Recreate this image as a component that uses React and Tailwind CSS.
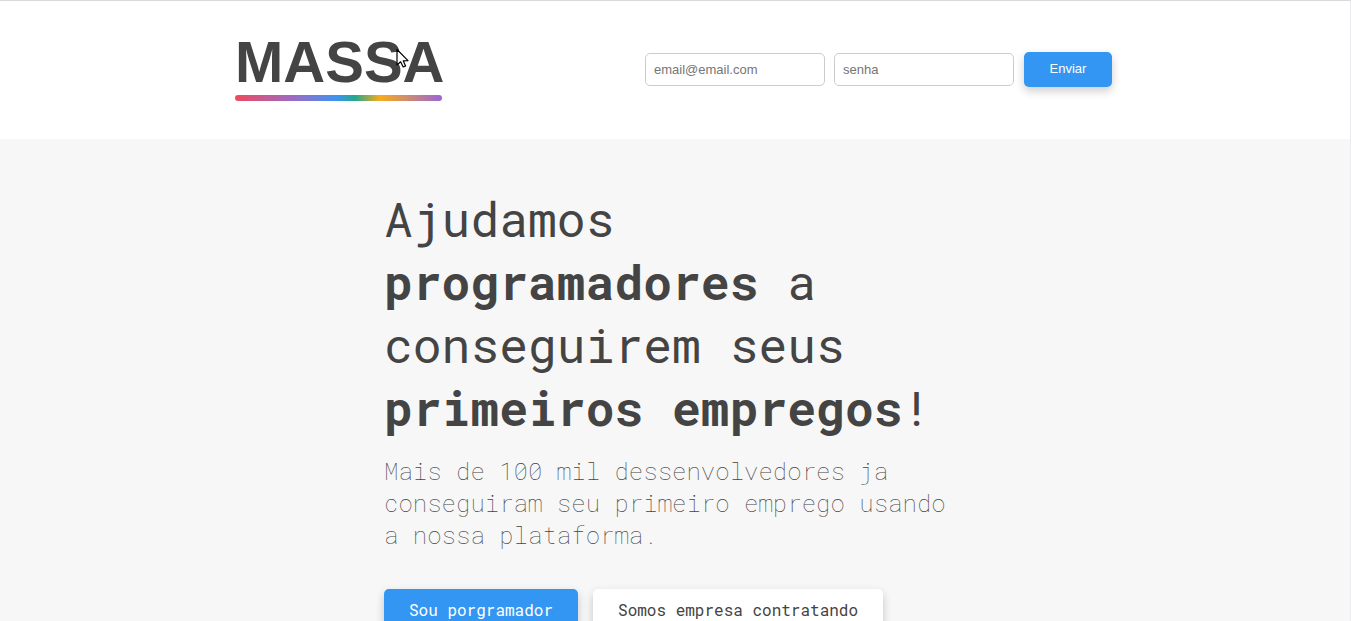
function Logo() {
  return (
    <a href="/" aria-label="Massa" className="flex flex-col gap-0.5 pb-2">
      <span className="text-[58px] leading-[62px] font-bold">MASSA</span>
      <span className="h-1.5 w-[207px] rounded-full bg-[linear-gradient(to_right,#ef4a60_0%,#9c6bc4_28%,#3f93f3_49%,#22a98c_58%,#f9ab1c_70%,#9b64d8_100%)]" />
    </a>
  );
}

function Cursor() {
  return (
    <svg
      aria-hidden="true"
      viewBox="0 0 13 20"
      className="pointer-events-none absolute top-[47px] left-[396px] h-5 w-[13px]"
    >
      <path
        d="M1 1.5 L1 17 L4.6 13.8 L7.2 19 L9.6 17.9 L7.3 12.9 L12 12.6 Z"
        fill="#fff"
        stroke="#000"
        strokeWidth="1.2"
        strokeLinejoin="round"
      />
    </svg>
  );
}

const field =
  "h-[33px] w-[180px] rounded-[5px] border border-[#ccc] bg-white px-2 text-[13px] placeholder:text-[#757575]";
const shadow = "shadow-[0_4px_10px_rgba(0,0,0,0.2)]";

export default function App() {
  return (
    <div className="relative min-h-screen border-t border-r border-t-[#d9d9dd] border-r-[#ebebee] bg-[#f7f7f7] font-['Liberation_Sans',sans-serif] text-[#444]">
      <header className="bg-white">
        <div className="mx-auto flex h-[138px] max-w-[880px] items-center justify-between">
          <Logo />
          <form className="mr-[3px] flex items-center gap-2.5 pb-0.5">
            <div className="flex gap-[9px]">
              <input type="email" aria-label="email" placeholder="email@email.com" className={field} />
              <input type="password" aria-label="senha" placeholder="senha" className={field} />
            </div>
            <button
              type="button"
              className={`h-[35px] w-[88px] rounded-[5px] bg-[#3396f3] text-[13px] text-white ${shadow}`}
            >
              Enviar
            </button>
          </form>
        </div>
      </header>
      <main className="mx-auto max-w-[582px] pt-12 font-['Roboto_Mono',monospace]">
        <h1 className="text-[48px] leading-[63px] font-normal">
          Ajudamos <strong className="font-bold">programadores</strong> a conseguirem seus{" "}
          <strong className="font-bold">primeiros empregos</strong>!
        </h1>
        <p className="mt-4 text-2xl leading-8 font-thin">
          Mais de 100 mil dessenvolvedores ja conseguiram seu primeiro emprego usando a nossa plataforma.
        </p>
        <div className="mt-[38px] flex gap-[15px]">
          <button type="button" className={`h-[41px] rounded-[5px] bg-[#3396f3] px-[25px] text-white ${shadow}`}>
            Sou porgramador
          </button>
          <button type="button" className={`h-[41px] rounded-[5px] bg-white px-[25px] ${shadow}`}>
            Somos empresa contratando
          </button>
        </div>
      </main>
      <Cursor />
    </div>
  );
}
